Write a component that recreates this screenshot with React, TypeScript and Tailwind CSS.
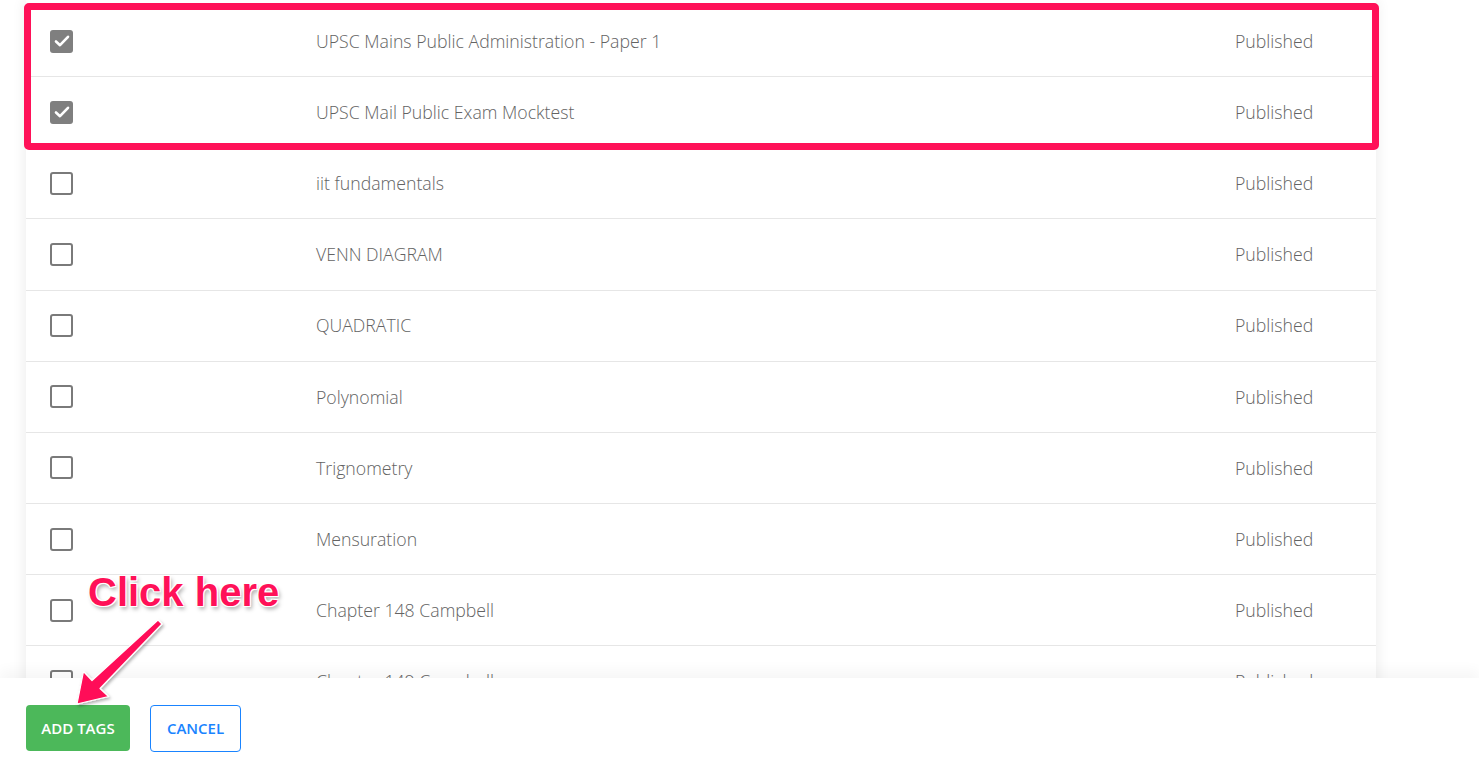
import { useState } from 'react'

interface Quiz {
  id: number
  title: string
  status: string
}

const QUIZZES: Quiz[] = [
  { id: 1, title: 'UPSC Mains Public Administration - Paper 1', status: 'Published' },
  { id: 2, title: 'UPSC Mail Public Exam Mocktest', status: 'Published' },
  { id: 3, title: 'iit fundamentals', status: 'Published' },
  { id: 4, title: 'VENN DIAGRAM', status: 'Published' },
  { id: 5, title: 'QUADRATIC', status: 'Published' },
  { id: 6, title: 'Polynomial', status: 'Published' },
  { id: 7, title: 'Trignometry', status: 'Published' },
  { id: 8, title: 'Mensuration', status: 'Published' },
  { id: 9, title: 'Chapter 148 Campbell', status: 'Published' },
  { id: 10, title: 'Chapter 149 Campbell', status: 'Published' },
]

function Checkbox({ checked, onClick }: { checked: boolean; onClick: () => void }) {
  return (
    <button
      onClick={onClick}
      className={
        checked
          ? 'w-[23px] h-[23px] rounded-[3px] bg-[#7f7f7f] flex items-center justify-center'
          : 'w-[23px] h-[23px] rounded-[3px] border-[2.5px] border-[#7a7a7a] bg-white'
      }
    >
      {checked && (
        <svg width="18" height="18" viewBox="0 0 18 18" fill="none">
          <path d="M3 9.5 L7 13.2 L15 4.8" stroke="#fff" strokeWidth="2.6" strokeLinecap="round" strokeLinejoin="round" />
        </svg>
      )}
    </button>
  )
}

export default function App() {
  const [selected, setSelected] = useState<Set<number>>(new Set([1, 2]))

  function toggle(id: number) {
    const next = new Set(selected)
    if (next.has(id)) { next.delete(id) } else { next.add(id) }
    setSelected(next)
  }

  return (
    <div className="relative h-[774px] w-[1479px] overflow-hidden bg-white" style={{ fontFamily: '"Open Sans", "Noto Sans", sans-serif' }}>
      {/* List card */}
      <div className="ml-[26px] w-[1350px] pt-[6px] bg-white shadow-[0_0_14px_rgba(0,0,0,0.09)]">
        {QUIZZES.map((q) => (
          <div key={q.id} className="flex items-center h-[71.15px] border-b border-[#e6e6e6] text-[17.7px] font-light text-[#636363]">
            <div className="w-[290px] pl-[24px] flex items-center">
              <Checkbox checked={selected.has(q.id)} onClick={() => toggle(q.id)} />
            </div>
            <div className="flex-1">{q.title}</div>
            <div className="w-[141px]">{q.status}</div>
          </div>
        ))}
      </div>

      {/* Footer */}
      <div className="absolute left-0 right-0 top-[678px] h-[96px] bg-white shadow-[0_-8px_12px_rgba(0,0,0,0.035)] flex items-start gap-[20px] pl-[26px] pt-[27px]">
        <button className="h-[46px] w-[104px] rounded-[4px] bg-[#4cb85a] text-white text-[15px] font-semibold">
          ADD TAGS
        </button>
        <button className="h-[47px] w-[91px] rounded-[4px] border border-[#1a84ff] bg-white text-[#1a84ff] text-[15px] font-semibold">
          CANCEL
        </button>
      </div>

      {/* Highlight annotation */}
      <div className="absolute left-[24px] top-[3px] w-[1355px] h-[147px] rounded-[5px] border-[7px] border-[#ff1158] pointer-events-none" />

      {/* Click here annotation */}
      <div
        className="absolute left-[88px] top-[572px] text-[40px] font-bold text-[#ff1158] leading-none pointer-events-none [text-shadow:0_0_2px_#fff,1px_1px_0_#fff,-1px_-1px_0_#fff,1px_-1px_0_#fff,-1px_1px_0_#fff,2px_3px_4px_rgba(0,0,0,0.35)]"
        style={{ fontFamily: '"Liberation Sans", Arial, sans-serif' }}
      >
        Click here
      </div>
      <svg className="absolute left-0 top-0 pointer-events-none" width="300" height="774" viewBox="0 0 300 774">
        <defs>
          <filter id="sh" x="-20%" y="-20%" width="140%" height="140%">
            <feDropShadow dx="1.5" dy="2" stdDeviation="1.5" floodColor="#000" floodOpacity="0.3" />
          </filter>
        </defs>
        <path
          d="M158 620 L162 624 L100 688.5 L108.5 696.5 L77 704 L83.5 671.5 L92 680.5 Z"
          fill="#ff1158"
          stroke="#fff"
          strokeWidth="1.2"
          strokeLinejoin="round"
          filter="url(#sh)"
        />
      </svg>
    </div>
  )
}
